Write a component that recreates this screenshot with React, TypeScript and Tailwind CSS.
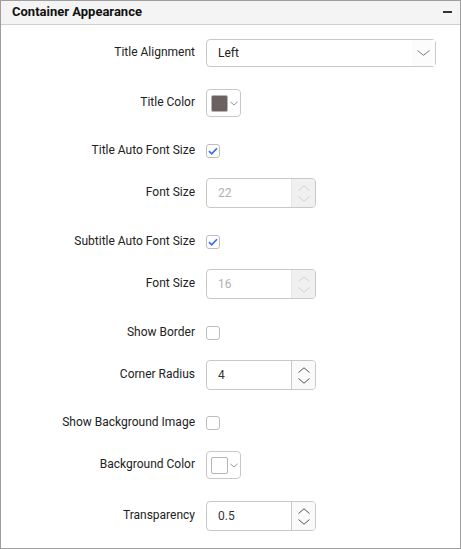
import React from "react";

const font = { fontFamily: "Roboto, 'Liberation Sans', sans-serif" };

const Chevron = ({ up, className }: { up?: boolean; className?: string }) => (
  <svg width="12" height="6" viewBox="0 0 12 6" className={className}>
    <path
      d={up ? "M0.5 5.5 L6 0.8 L11.5 5.5" : "M0.5 0.5 L6 5.2 L11.5 0.5"}
      fill="none"
      stroke="currentColor"
      strokeWidth="1"
    />
  </svg>
);

const Check = ({ checked }: { checked?: boolean }) => (
  <div className="w-[14px] h-[14px] rounded-[3px] border border-[#bdbdbd] bg-white flex items-center justify-center">
    {checked && (
      <svg width="10" height="8" viewBox="0 0 10 8">
        <path d="M1 4.2 L3.7 6.8 L9 1.2" fill="none" stroke="#2f6bf0" strokeWidth="1.6" />
      </svg>
    )}
  </div>
);

const ColorPick = ({ color }: { color: string }) => (
  <div className="w-[35px] h-[28px] rounded-[4px] border border-[#c8c8c8] bg-white flex items-center pl-[4px]">
    <div className="w-[17px] h-[17px] rounded-[2px] border border-[#b5b5b5]" style={{ background: color }} />
    <Chevron className="ml-[2px] w-[8px] h-[5px] text-[#666]" />
  </div>
);

const NumInput = ({ value, disabled }: { value: string; disabled?: boolean }) => (
  <div className="w-[110px] h-[30px] rounded-[4px] border border-[#c8c8c8] bg-white flex overflow-hidden">
    <div className={`flex-1 flex items-center pl-[11px] text-[12px] ${disabled ? "text-[#b0b0b0]" : "text-[#333]"}`}>
      {value}
    </div>
    <div
      className={`w-[24px] flex flex-col items-center justify-center gap-[5px] border-l ${
        disabled ? "bg-[#f0f0f0] border-[#e6e6e6] text-[#d2d2d2]" : "bg-[#fafafa] border-[#c8c8c8] text-[#555]"
      }`}
    >
      <Chevron up />
      <Chevron />
    </div>
  </div>
);

const Row = ({ label, mt, children }: { label: string; mt: string; children: React.ReactNode }) => (
  <div className={`flex items-center h-[30px] ${mt}`}>
    <div className="w-[194px] text-right text-[12px] text-[#222] -mt-[2px]">{label}</div>
    <div className="ml-[11px] flex items-center">{children}</div>
  </div>
);

export default function App() {
  return (
    <div className="w-[461px] h-[549px] border border-[#9e9e9e] bg-white" style={font}>
      <div className="h-[24px] bg-[#f4f4f4] border-b border-[#cfcfcf] flex items-center justify-between pl-[11px] pr-[8px]">
        <span className="text-[13px] font-bold text-[#111] -mt-[2px]">Container Appearance</span>
        <div className="w-[9px] h-[2px] bg-[#333] -mt-[2px]" />
      </div>
      <Row label="Title Alignment" mt="mt-[13px]">
        <div className="w-[230px] h-[28px] rounded-[4px] border border-[#c8c8c8] bg-white flex items-center justify-between pl-[11px]">
          <span className="text-[12px] text-[#222]">Left</span>
          <div className="w-[23px] h-full flex items-center justify-center bg-[#fcfcfc]">
            <svg width="13" height="6" viewBox="0 0 13 6" className="text-[#777]">
              <path d="M0.5 0.5 L6.5 5.3 L12.5 0.5" fill="none" stroke="currentColor" strokeWidth="1" />
            </svg>
          </div>
        </div>
      </Row>
      <Row label="Title Color" mt="mt-[20px]">
        <ColorPick color="#6b6161" />
      </Row>
      <Row label="Title Auto Font Size" mt="mt-[18px]">
        <Check checked />
      </Row>
      <Row label="Font Size" mt="mt-[12px]">
        <NumInput value="22" disabled />
      </Row>
      <Row label="Subtitle Auto Font Size" mt="mt-[19px]">
        <Check checked />
      </Row>
      <Row label="Font Size" mt="mt-[12px]">
        <NumInput value="16" disabled />
      </Row>
      <Row label="Show Border" mt="mt-[19px]">
        <Check />
      </Row>
      <Row label="Corner Radius" mt="mt-[12px]">
        <NumInput value="4" />
      </Row>
      <Row label="Show Background Image" mt="mt-[18px]">
        <Check />
      </Row>
      <Row label="Background Color" mt="mt-[12px]">
        <ColorPick color="#ffffff" />
      </Row>
      <Row label="Transparency" mt="mt-[21px]">
        <NumInput value="0.5" />
      </Row>
    </div>
  );
}
